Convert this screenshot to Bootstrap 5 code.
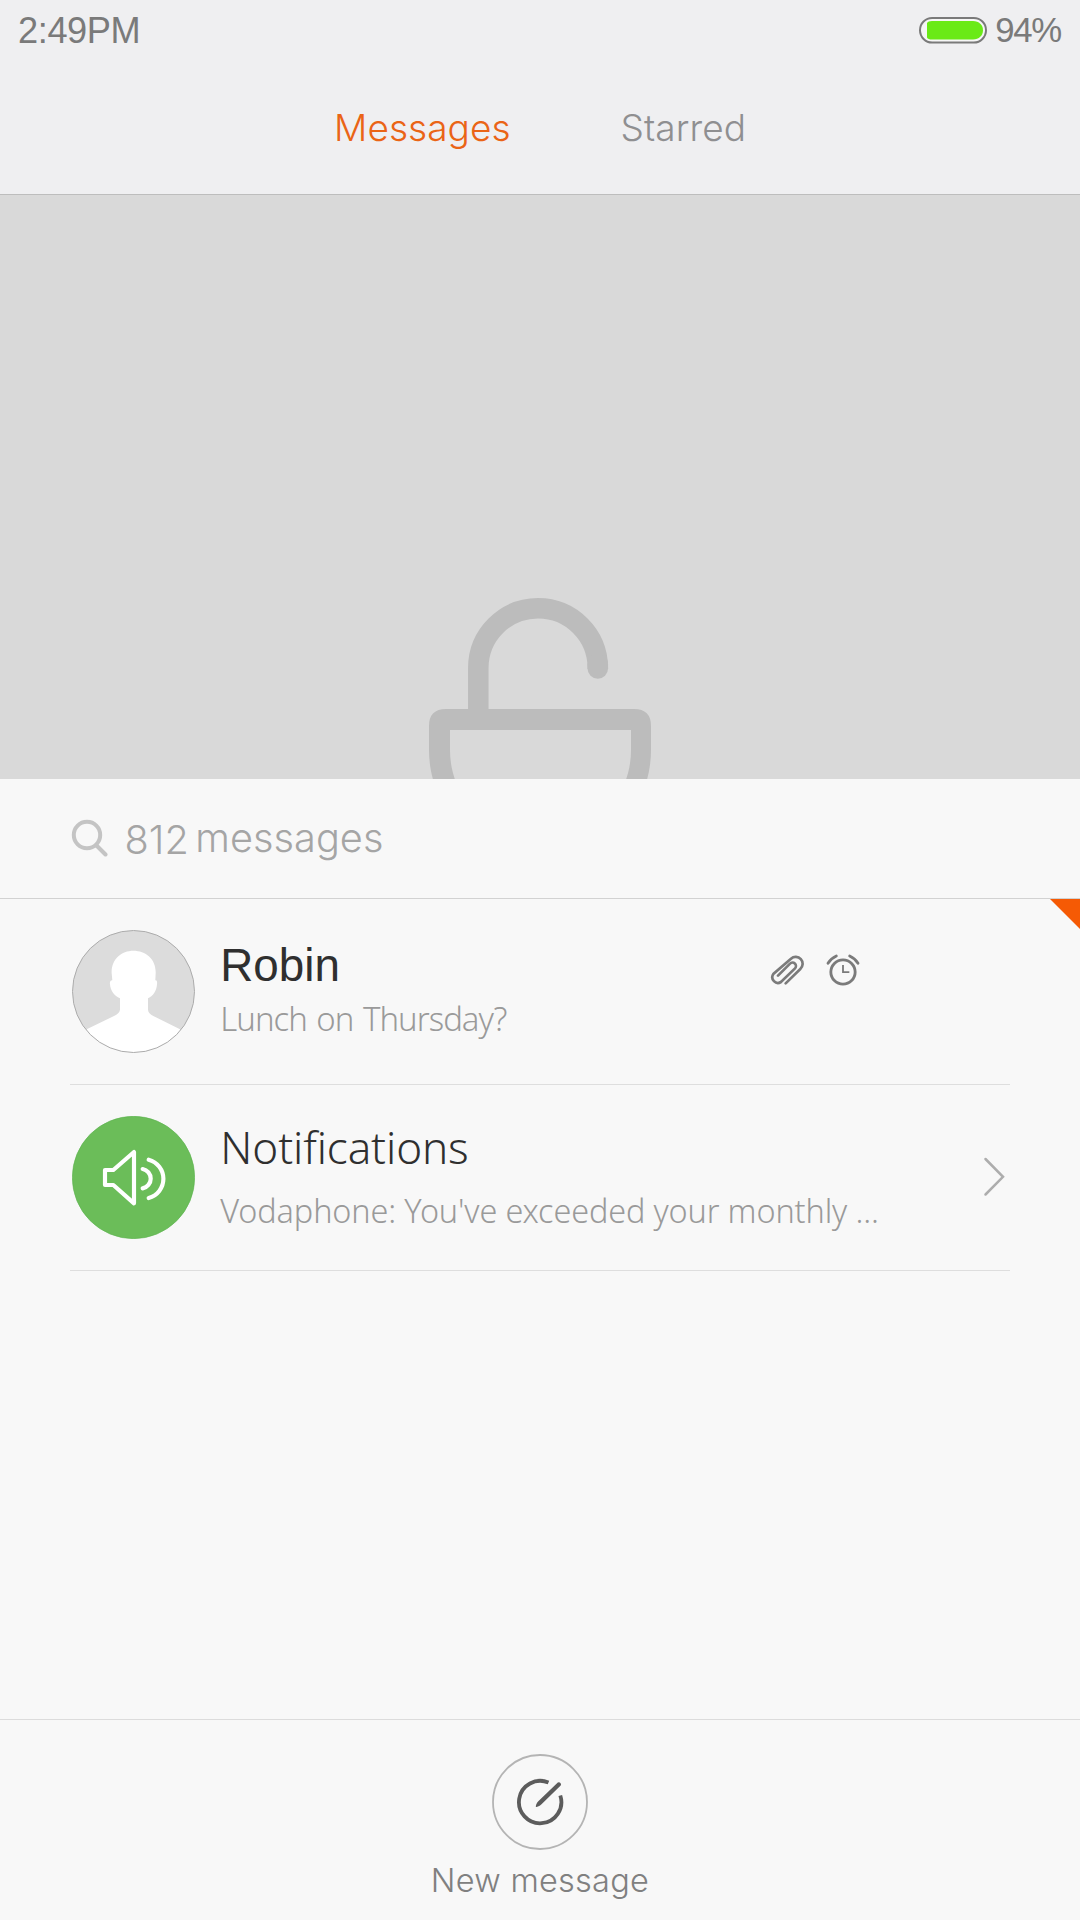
<!DOCTYPE html>
<html lang="en">
<head>
<meta charset="utf-8">
<meta name="viewport" content="width=device-width, initial-scale=1">
<title>Messages</title>
<link href="https://cdn.jsdelivr.net/npm/bootstrap@5.3.0/dist/css/bootstrap.min.css" rel="stylesheet">
<style>
body{background:#f8f8f8;font-family:Inter,"Liberation Sans",sans-serif;font-weight:300}
svg{display:block;flex:none}
.screen{height:1920px}
.top-area{height:195px;background:#efeff1;border-bottom:1px solid #bdbdbd}
.status{height:61px;padding:0 18px;font:400 36.2px/1 "Liberation Sans",sans-serif;color:#7a7a7a}
.clock{letter-spacing:-.4px;padding-top:2px}
.level{font-size:34.8px;letter-spacing:-1.4px;margin-left:8.5px;margin-right:1.2px}
.tabs{gap:110px;font-size:37px;letter-spacing:.05px}
.tabs a{color:#8f8f91;text-decoration:none}
.tabs a.active{color:#ea6416}
.hero{height:584px;background:#d9d9d9}
.search{height:120px;padding-left:71px;border-bottom:1px solid #d2d2d2;color:#a5a5a5;font-size:39.7px;line-height:48px}
.search svg{margin-top:40px}
.total{margin:36.5px 0 0 16.5px}
.unit{margin:35px 0 0 6.5px;letter-spacing:.05px}
.thread{height:186px;margin:0 70px;border-bottom:1px solid #dedede;padding-left:2px}
.thread>svg:first-child{margin-top:31px}
.copy{margin-left:25.3px}
.who{color:#2f2f2f}
.robin .who{font:400 45.8px/52px "Liberation Sans",sans-serif;margin-top:41px}
.robin .preview{font-size:32.9px;letter-spacing:-.98px;word-spacing:2px;margin-top:5.1px}
.notif .who{font:300 44px/60px "Noto Sans",sans-serif;margin-top:31.6px;letter-spacing:-.1px}
.notif .preview{font-size:32.4px;letter-spacing:-.13px;margin-top:11.8px}
.preview{font-family:"Noto Sans",sans-serif;line-height:44px;color:#9a9a9a;white-space:nowrap}
.flags{gap:21.5px;margin:55.2px 150.5px 0 auto}
.chev{margin:72px 4px 0 auto}
.corner{width:30px;height:30px}
.bottom-bar{height:201px;border-top:1px solid #dcdcdc;padding-top:34px;color:#808080;font-size:32.5px;line-height:40px;letter-spacing:.25px}
.bottom-bar div{margin-top:10.8px}
</style>
</head>
<body>
<div class="screen d-flex flex-column overflow-hidden">
  <header class="top-area d-flex flex-column">
    <div class="status d-flex align-items-center">
      <span class="clock">2:49PM</span>
      <svg class="ms-auto" width="68" height="27" viewBox="0 0 68 27"><rect x="1" y="1" width="66" height="24.5" rx="12.2" fill="#f6f6f6" stroke="#7a7a7a" stroke-width="2"/><path d="M8 6Q9 4 13 4H54C60 4 64 8 64 13.200S60 22.500 54 22.500H13Q9 22.500 8 20.500Z" fill="#6aea16"/></svg>
      <span class="level">94%</span>
    </div>
    <nav class="tabs d-flex flex-fill align-items-center justify-content-center">
      <a class="active" href="#">Messages</a>
      <a href="#">Starred</a>
    </nav>
  </header>

  <section class="hero">
    <svg width="1080" height="584" viewBox="0 195 1080 584" fill="none" stroke="#bcbcbc" stroke-width="20.500">
      <path d="M478.300 715V668A59.750 59.750 0 0 1 597.800 668V669"/>
      <path d="M597.800 664V668.600" stroke-linecap="round"/>
      <path fill="#bcbcbc" stroke="none" fill-rule="evenodd" d="M429 750V726Q429 709 446 709H634Q651 709 651 726V750A111 111 0 0 1 429 750ZM450 730V750A90.500 90.500 0 0 0 631 750V730Z"/>
    </svg>
  </section>

  <section class="search d-flex align-items-start">
    <svg width="37" height="38" viewBox="0 0 37 38" fill="none" stroke="#c4c4c4" stroke-width="4"><circle cx="16" cy="16" r="13.200"/><path d="M25.500 26.500L34.500 35.500" stroke-linecap="round"/></svg>
    <span class="total">812</span><span class="unit">messages</span>
  </section>

  <main class="flex-fill position-relative">
    <svg class="corner position-absolute top-0 end-0" viewBox="0 0 30 30"><path d="M0 0H30V30Z" fill="#f55a05"/></svg>
    <article class="thread robin d-flex align-items-start">
      <svg width="123" height="123" viewBox="36 60 369 369">
        <defs><clipPath id="face"><circle cx="220.500" cy="244.500" r="183"/></clipPath></defs>
        <circle cx="220.500" cy="244.500" r="183" fill="#dcdcdc"/>
        <path clip-path="url(#face)" fill="#fff" d="M220 122C258 122 289 148 287 190L286 211Q293 210 291 223C290 241 280 258 264 265V299Q265 311 280 318L360 358V430H80V358L162 318Q178 311 180 299V265C163 258 151 241 150 223Q148 210 157 211L155 190C153 148 184 122 220 122Z"/>
        <circle cx="220.500" cy="244.500" r="183" fill="none" stroke="#acacac" stroke-width="3"/>
      </svg>
      <div class="copy">
        <div class="who">Robin</div>
        <div class="preview">Lunch on Thursday?</div>
      </div>
      <div class="flags d-flex">
        <svg width="34" height="32" viewBox="90 193 102 96" fill="none" stroke="#7b7b7b" stroke-width="8" stroke-linecap="round"><path d="M137 281L181 238A19 19 0 0 0 153 207L100 253A17 17 0 0 0 123 277L165 236A10 10 0 0 0 150 222L114 258"/></svg>
        <svg width="34" height="32" viewBox="257 193 102 96" fill="none" stroke="#7b7b7b" stroke-width="8.500"><circle cx="308" cy="247" r="36.500"/><path d="M308 226V247.500H327" stroke-width="5.500"/><path d="M263 221Q272 206 288 199M328 199Q344 206 353 221" stroke-linecap="round"/></svg>
      </div>
    </article>
    <article class="thread notif d-flex align-items-start">
      <svg width="123" height="123" viewBox="36 78 369 369">
        <circle cx="220.500" cy="262.500" r="183.500" fill="#6bbd59" stroke="#5db350" stroke-width="2"/>
        <path d="M135 240H160L222 186V340L160 285H135ZM248 237A29.500 29.500 0 0 1 248 295M266 209A59.500 59.500 0 0 1 266 324" fill="none" stroke="#fff" stroke-width="12.500" stroke-linejoin="round" stroke-linecap="round"/>
      </svg>
      <div class="copy">
        <div class="who">Notifications</div>
        <div class="preview">Vodaphone: You've exceeded your monthly ...</div>
      </div>
      <svg class="chev" width="23" height="40" viewBox="0 0 23 40" fill="none" stroke="#adadad" stroke-width="2.500" stroke-linecap="round"><path d="M2.500 2L20 19.800L2.500 37.500"/></svg>
    </article>
  </main>

  <footer class="bottom-bar d-flex flex-column align-items-center">
    <svg width="96" height="96" viewBox="0 0 96 96" fill="none"><circle cx="48" cy="48" r="47" stroke="#b4b4b4" stroke-width="1.800"/><path d="M56.500 28.600A21.200 21.200 0 1 0 68.300 41.500" stroke="#5c5c5c" stroke-width="3.800"/><path d="M43.800 52.300C44.200 50 45 48.500 46.300 47.200L65.800 28.600A2.100 2.100 0 0 1 68.700 31.500L49.500 50.200C48 51.600 46.500 52.400 44.600 53Q43.600 53.200 43.800 52.300Z" fill="#5c5c5c"/></svg>
    <div>New message</div>
  </footer>
</div>
</body>
</html>
